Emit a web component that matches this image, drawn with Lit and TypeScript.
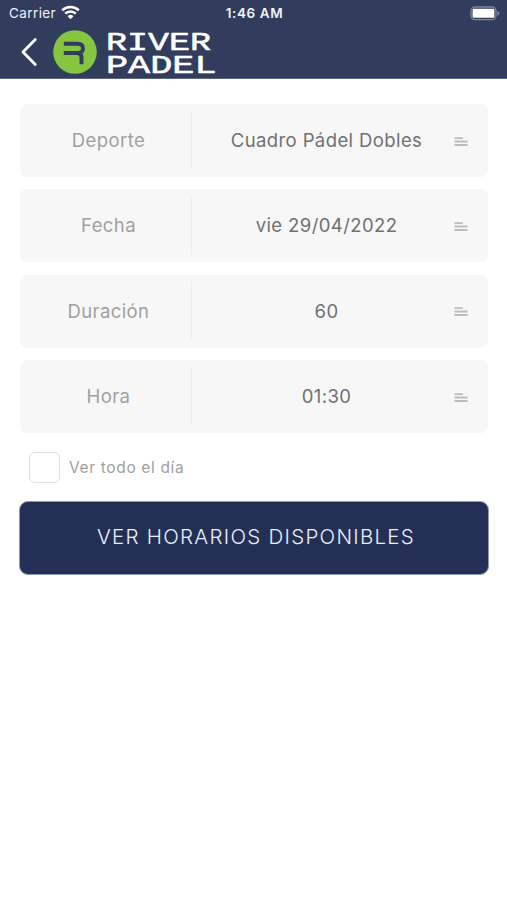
import { LitElement, html, css } from "lit";
import { customElement, property } from "lit/decorators.js";

@customElement("status-bar")
class StatusBar extends LitElement {
  static styles = css`
    :host {
      display: grid;
      grid-template-columns: 1fr auto 1fr;
      align-items: center;
      height: 27px;
      padding: 0 7px 0 9px;
      color: #f0f4fb;
      font: 400 13.5px/27px Inter, "Liberation Sans", sans-serif;
    }
    .carrier { display: flex; align-items: center; gap: 5px; letter-spacing: 0.4px; }
    .carrier svg { margin-top: -2px; }
    .time { font-weight: 600; font-size: 13.5px; letter-spacing: 0.6px; }
    .battery { justify-self: end; margin-top: -1px; }
    svg { display: block; }
  `;
  render() {
    return html`
      <div class="carrier">
        <span>Carrier</span>
        <svg width="19" height="15" viewBox="0 0 19 15" fill="none" stroke="#fff" stroke-width="2.5">
          <path d="M1.2 5.4a11.8 11.8 0 0 1 16.6 0M4.2 8.6a7.5 7.5 0 0 1 10.6 0" />
          <path d="M9.5 14.2 6.6 11.2a4.1 4.1 0 0 1 5.8 0Z" fill="#fff" stroke="none" />
        </svg>
      </div>
      <span class="time">1:46 AM</span>
      <svg class="battery" width="30" height="15" viewBox="0 0 30 15">
        <rect x="1" y="1" width="25" height="12.6" rx="3.8" fill="none" stroke="#7d86a1" stroke-width="1.3" />
        <rect x="2.6" y="2.8" width="21.8" height="9" rx="1.2" fill="#fff" />
        <path d="M27.3 5c3 1 3 3.7 0 4.7Z" fill="#7d86a1" />
      </svg>
    `;
  }
}

@customElement("brand-bar")
class BrandBar extends LitElement {
  static styles = css`
    :host { display: flex; align-items: flex-start; height: 51px; padding-left: 20px; }
    svg { display: block; }
    .back { margin: 10px 14.5px 0 0; }
    .badge { margin: 3px 10.5px 0 0; }
    .wordmark { overflow: visible; }
    .name {
      font-family: "Liberation Mono", monospace;
      font-size: 26.5px;
      fill: #fff;
      stroke: #fff;
      stroke-width: 0.6px;
      stroke-linejoin: round;
    }
  `;
  render() {
    return html`
      <svg class="back" width="18" height="30" viewBox="0 0 18 30" fill="none" stroke="#fff" stroke-width="2.8" stroke-linecap="round" stroke-linejoin="round">
        <path d="M15.3 2.6 3 15l12.3 12.4" />
      </svg>
      <svg class="badge" width="44" height="44" viewBox="0 0 44 44">
        <circle cx="22" cy="22" r="21.8" fill="#86c540" />
        <path d="M10.8 13.8H24.5q5.500 0 5.500 4.600t-5.500 4.600H10.8M20.5 23H23.700q4.800 0 4.800 4.800v6.400" fill="none" stroke="#323c5c" stroke-width="3.900" />
      </svg>
      <svg class="wordmark" width="112" height="56" viewBox="0 0 112 56">
        <text class="name" x="-1" y="22.800" textLength="105" lengthAdjust="spacingAndGlyphs">RIVER</text>
        <text class="name" x="-1" y="46.200" textLength="110.500" lengthAdjust="spacingAndGlyphs">PADEL</text>
      </svg>
    `;
  }
}

@customElement("picker-row")
class PickerRow extends LitElement {
  @property() label = "";
  @property() value = "";
  static styles = css`
    :host {
      display: grid;
      grid-template-columns: 171px 1px 268px 1fr;
      align-items: center;
      height: 73px;
      border-radius: 7px;
      background: #f7f7f7;
      font: 400 18.5px/24px Inter, "Liberation Sans", sans-serif;
      text-align: center;
    }
    .label { color: #a0a0a0; padding-left: 6px; letter-spacing: 0.4px; }
    .rule { height: 58px; background: #ededed; }
    .value { color: #707070; letter-spacing: 0.4px; padding-left: 1px; }
    .label, .value { margin-top: -1.5px; }
    .lines { display: block; margin: 2px 0 0 -6px; }
  `;
  render() {
    return html`
      <span class="label">${this.label}</span>
      <span class="rule"></span>
      <span class="value">${this.value}</span>
      <svg class="lines" width="14" height="10" viewBox="0 0 14 10" fill="#bcbcbc">
        <path d="M.5.3h8.3v1.6H.5zM.5 3.5h13v2H.5zM.5 7h13v2H.5z" />
      </svg>
    `;
  }
}

@customElement("app-root")
class AppRoot extends LitElement {
  static styles = css`
    :host {
      display: block;
      min-height: 900px;
      background: #fff;
      font-family: Inter, "Liberation Sans", sans-serif;
    }
    .header { height: 78px; background: #323c5c; border-bottom: 1px solid #5f6680; }
    .form { display: flex; flex-direction: column; padding: 25px 18px 0 19px; }
    .rows { display: flex; flex-direction: column; gap: 12.45px; padding: 0 1px; }
    .check {
      display: flex;
      align-items: center;
      gap: 9px;
      margin: 18.5px 0 0 10px;
      color: #a0a0a0;
      font-size: 15.5px;
      letter-spacing: 0.65px;
    }
    .box { box-sizing: border-box; width: 31px; height: 31px; border: 1.5px solid #e2e2e2; border-radius: 6px; }
    .submit {
      height: 74px;
      margin-top: 18px;
      padding: 0 0 1px 4px;
      border: 1px solid #8e96b4;
      border-radius: 9px;
      background: #242f55;
      color: #e8f2fc;
      font: 300 20.5px/24px Inter, "Liberation Sans", sans-serif;
      letter-spacing: 1.28px;
    }
  `;
  private fields = [
    ["Deporte", "Cuadro Pádel Dobles"],
    ["Fecha", "vie 29/04/2022"],
    ["Duración", "60"],
    ["Hora", "01:30"],
  ];
  render() {
    return html`
      <div class="header">
        <status-bar></status-bar>
        <brand-bar></brand-bar>
      </div>
      <div class="form">
        <div class="rows">
          ${this.fields.map(([l, v]) => html`<picker-row .label=${l} .value=${v}></picker-row>`)}
        </div>
        <div class="check"><span class="box"></span><span>Ver todo el día</span></div>
        <button class="submit">VER HORARIOS DISPONIBLES</button>
      </div>
    `;
  }
}
